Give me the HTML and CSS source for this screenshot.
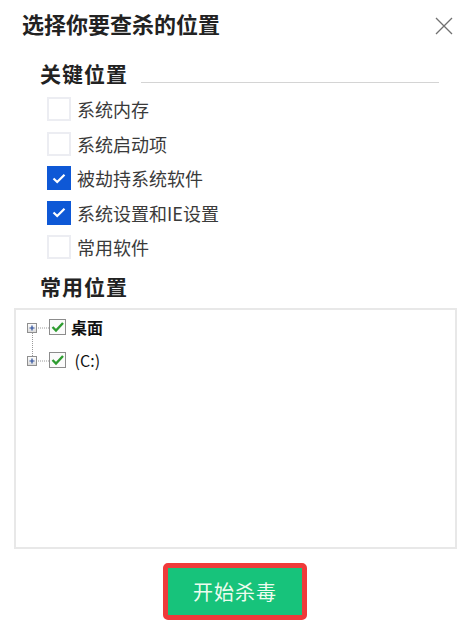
FILE: index.html
```html
<!DOCTYPE html>
<html>
    <head>
        <meta charset="utf-8">
        <title>选择你要查杀的位置</title>
        <link rel="stylesheet" href="styles.css">
    </head>
    <body>
        <div class="dialog">
            <div class="header">
                <h1 class="title">选择你要查杀的位置</h1>
                <span class="close">
                    <svg width="18" height="18" viewBox="0 0 18 18"><path d="M1 1 L17 17 M17 1 L1 17" stroke="#707070" stroke-width="1.3" fill="none"/></svg>
                </span>
            </div>

            <div class="group-title"><span>关键位置</span><span class="rule"></span></div>
            <ul class="options">
                <li><span class="box"></span>系统内存</li>
                <li><span class="box"></span>系统启动项</li>
                <li><span class="box checked"><svg width="14" height="11" viewBox="0 0 14 11"><path d="M1.5 5.5 L5.2 9 L12.5 1.8" stroke="#fff" stroke-width="2.2" fill="none"/></svg></span>被劫持系统软件</li>
                <li><span class="box checked"><svg width="14" height="11" viewBox="0 0 14 11"><path d="M1.5 5.5 L5.2 9 L12.5 1.8" stroke="#fff" stroke-width="2.2" fill="none"/></svg></span>系统设置和IE设置</li>
                <li><span class="box"></span>常用软件</li>
            </ul>

            <div class="group-title second"><span>常用位置</span></div>
            <div class="tree">
                <div class="node first">
                    <svg width="42" height="18" viewBox="0 0 42 18">
                        <defs>
                            <linearGradient id="pb" x1="0" y1="0" x2="0" y2="1"><stop offset="0" stop-color="#fff"/><stop offset="1" stop-color="#d9d9d9"/></linearGradient>
                        </defs>
                        <rect x="0.5" y="5.5" width="9" height="9" fill="url(#pb)" stroke="#8f8f8f"/>
                        <path d="M2.5 10 H7.5 M5 7.5 V12.5" stroke="#2a4d9b" stroke-width="1.2"/>
                        <path d="M11 10 H22" stroke="#9a9a9a" stroke-dasharray="1 1"/>
                        <rect x="22.5" y="1.5" width="16" height="15" fill="#fbfbfb" stroke="#8c8c8c"/>
                        <path d="M25.5 9 L29 12.5 L36 5" stroke="#2e9c30" stroke-width="2.4" fill="none"/>
                    </svg>
                    <span class="node-label bold">桌面</span>
                </div>
                <div class="node">
                    <svg width="42" height="18" viewBox="0 0 42 18">
                        <rect x="0.5" y="5.5" width="9" height="9" fill="url(#pb)" stroke="#8f8f8f"/>
                        <path d="M2.5 10 H7.5 M5 7.5 V12.5" stroke="#2a4d9b" stroke-width="1.2"/>
                        <path d="M11 10 H22" stroke="#9a9a9a" stroke-dasharray="1 1"/>
                        <rect x="22.5" y="1.5" width="16" height="15" fill="#fbfbfb" stroke="#8c8c8c"/>
                        <path d="M25.5 9 L29 12.5 L36 5" stroke="#2e9c30" stroke-width="2.4" fill="none"/>
                    </svg>
                    <span class="node-label">&nbsp;(C:)</span>
                </div>
            </div>

            <div class="actions">
                <button class="scan-btn">开始杀毒</button>
            </div>
        </div>
    </body>
</html>
```

FILE: styles.css
```css
body {
    margin: 0;
    background-color: #ffffff;
    font-family: "Noto Sans CJK SC", "Liberation Sans", sans-serif;
    color: #333;
}
.dialog {
    width: 460px;
    height: 626px;
    overflow: hidden;
}
.header {
    display: flex;
    justify-content: space-between;
    align-items: center;
    padding: 10px 7px 0 22px;
}
.title {
    margin: 0;
    font-size: 22px;
    line-height: 26px;
    font-weight: 700;
    color: #222;
}
.close {
    display: flex;
    padding-top: 5px;
}
.group-title {
    display: flex;
    margin: 25px 21px 0 40px;
    font-size: 21px;
    line-height: 24px;
    font-weight: 700;
    color: #222;
    letter-spacing: 1px;
}
.group-title.second {
    margin-top: 9px;
}
.rule {
    flex: 1;
    height: 1px;
    background-color: #d4d4d4;
    align-self: flex-end;
    margin: 0 0 2px 13px;
}
.options {
    list-style: none;
    margin: 7px 0 0 0;
    padding: 0 0 0 47px;
}
.options li {
    display: flex;
    align-items: center;
    height: 34.5px;
    font-size: 18px;
    color: #3a3a3a;
}
.box {
    box-sizing: border-box;
    width: 24px;
    height: 24px;
    margin-right: 6px;
    border: 2px solid #ecedf2;
    display: flex;
    align-items: center;
    justify-content: center;
}
.box.checked {
    background-color: #0e58d6;
    border-color: #0e58d6;
}
.tree {
    box-sizing: border-box;
    width: 443px;
    height: 241px;
    margin: 10px 0 0 14px;
    border: 2px solid #e8e8e8;
    padding: 8px 0 0 11px;
}
.node {
    position: relative;
    display: flex;
    align-items: flex-start;
    height: 33px;
}
.node svg {
    margin-right: 2px;
}
.node.first::before {
    content: "";
    position: absolute;
    left: 5px;
    top: 15px;
    height: 23px;
    border-left: 1px dotted #9a9a9a;
}
.node-label {
    font-size: 16px;
    line-height: 18px;
    color: #111;
}
.node-label.bold {
    font-weight: 700;
}
.actions {
    margin: 14px 0 0 163px;
}
.scan-btn {
    box-sizing: border-box;
    width: 144px;
    height: 57px;
    border: 5px solid #f03a3a;
    border-radius: 5px;
    background-color: #17c37b;
    color: #eefcef;
    font-family: "Noto Sans CJK SC", sans-serif;
    font-size: 20px;
    letter-spacing: 1px;
    padding: 0;
    cursor: pointer;
}
```
